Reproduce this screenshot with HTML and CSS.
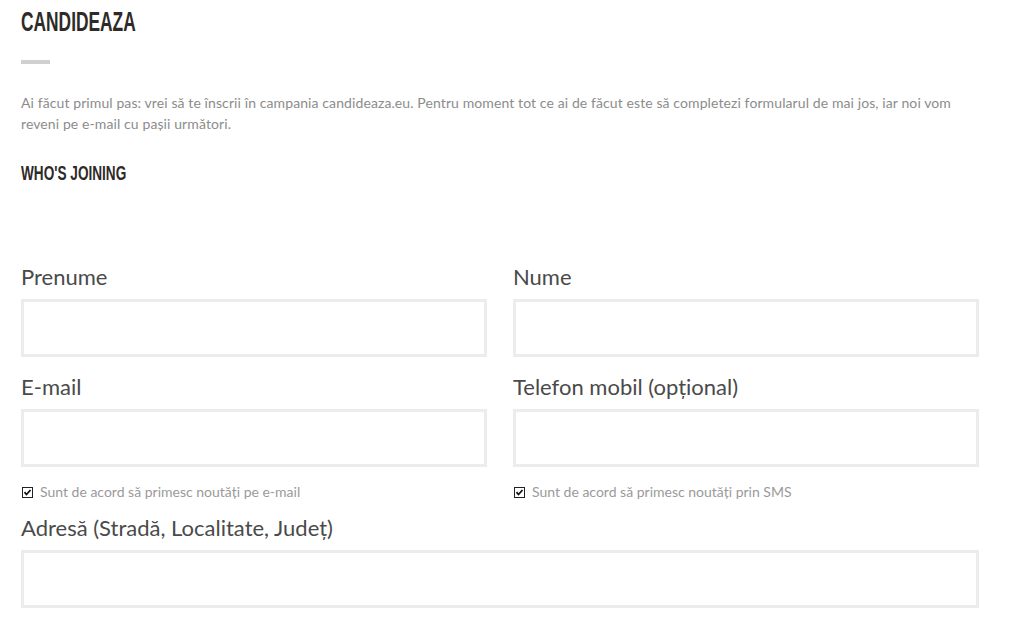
FILE: index.html
```html
<!DOCTYPE html>
<html lang="ro">
<head>
<meta charset="utf-8">
<title>Candideaza</title>
<link rel="stylesheet" href="styles.css">
</head>
<body>
<main class="page">
  <h1 class="title"><span class="title-text">CANDIDEAZA</span></h1>
  <div class="title-bar"></div>
  <p class="intro">Ai făcut primul pas: vrei să te înscrii în campania candideaza.eu. Pentru moment tot ce ai de făcut este să completezi formularul de mai jos, iar noi vom reveni pe e-mail cu pașii următori.</p>
  <h3 class="subtitle"><span class="subtitle-text">WHO'S JOINING</span></h3>

  <form class="form">
    <div class="field">
      <label class="label">Prenume</label>
      <input class="input" type="text">
    </div>
    <div class="field">
      <label class="label">Nume</label>
      <input class="input" type="text">
    </div>
    <div class="field">
      <label class="label">E-mail</label>
      <input class="input" type="text">
      <div class="check">
        <svg class="box" width="11" height="11" viewBox="0 0 11 11"><rect x="0.5" y="0.5" width="10" height="10" fill="#fff" stroke="#222"/><path d="M2.5 5.2 L4.5 7.5 L8.5 3" fill="none" stroke="#111" stroke-width="1.8"/></svg>
        <span>Sunt de acord să primesc noutăți pe e-mail</span>
      </div>
    </div>
    <div class="field">
      <label class="label">Telefon mobil (opțional)</label>
      <input class="input" type="text">
      <div class="check">
        <svg class="box" width="11" height="11" viewBox="0 0 11 11"><rect x="0.5" y="0.5" width="10" height="10" fill="#fff" stroke="#222"/><path d="M2.5 5.2 L4.5 7.5 L8.5 3" fill="none" stroke="#111" stroke-width="1.8"/></svg>
        <span>Sunt de acord să primesc noutăți prin SMS</span>
      </div>
    </div>
    <div class="field field-wide">
      <label class="label">Adresă (Stradă, Localitate, Județ)</label>
      <input class="input" type="text">
    </div>
  </form>
</main>
</body>
</html>
```
FILE: styles.css
```css
html, body {
  margin: 0;
  padding: 0;
  background: #fff;
}
.page {
  width: 958px;
  padding: 6px 0 0 21px;
  font-family: Lato, "Liberation Sans", sans-serif;
}
.title {
  margin: 0;
  font-family: "Liberation Sans", Arial, sans-serif;
  font-weight: 700;
  font-size: 28px;
  line-height: 32px;
  color: #2d2a28;
}
.title-text {
  display: inline-block;
  transform: scaleX(0.62);
  transform-origin: left center;
}
.title-bar {
  width: 29px;
  height: 4px;
  background: #d0d0d0;
  margin-top: 22px;
}
.intro {
  margin: 28px 0 0;
  font-size: 14px;
  line-height: 21px;
  letter-spacing: 0.1px;
  color: #8c8c8c;
}
.subtitle {
  margin: 27px 0 0;
  font-family: "Liberation Sans", Arial, sans-serif;
  font-weight: 700;
  font-size: 20px;
  line-height: 24px;
  color: #2d2a28;
}
.subtitle-text {
  display: inline-block;
  transform: scaleX(0.68);
  transform-origin: left center;
}
.form {
  margin-top: 79px;
  display: grid;
  grid-template-columns: 466px 466px;
  column-gap: 26px;
  row-gap: 17px;
}
.field {
  display: flex;
  flex-direction: column;
}
.field-wide {
  grid-column: 1 / 3;
  margin-top: -3px;
}
.label {
  font-size: 22px;
  line-height: 26px;
  color: #4a4a4a;
  margin-bottom: 9px;
}
.input {
  box-sizing: border-box;
  height: 58px;
  border: 3px solid #ececec;
  background: #fff;
  margin: 0;
  outline: none;
}
.check {
  display: flex;
  align-items: center;
  gap: 7px;
  margin-top: 16px;
  padding-left: 1px;
  font-size: 14px;
  line-height: 18px;
  color: #9a9a9a;
}
.box {
  flex: none;
}
```
